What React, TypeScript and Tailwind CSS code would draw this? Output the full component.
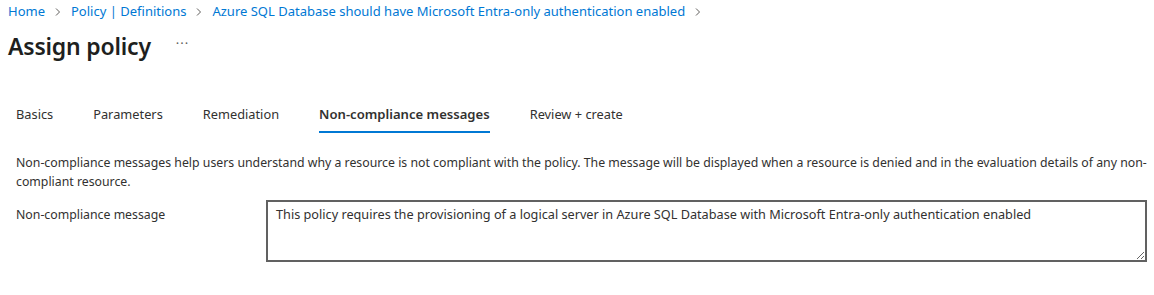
const tabs = ["Basics", "Parameters", "Remediation", "Non-compliance messages", "Review + create"];

const Chevron = () => (
  <svg width="8" height="10" viewBox="0 0 8 10" className="mx-[9px] shrink-0">
    <path d="M2 1.5 L5.5 5 L2 8.5" fill="none" stroke="#605e5c" strokeWidth="1" />
  </svg>
);

export default function App() {
  const active = "Non-compliance messages";

  return (
    <div
      className="w-[1154px] h-[295px] bg-white text-[#323130] overflow-hidden"
      style={{ fontFamily: '"Segoe UI", "Noto Sans", sans-serif' }}
    >
      <nav className="flex items-center h-[24px] pl-[8px] text-[13px] text-[#0078d4]">
        <span>Home</span>
        <Chevron />
        <span>Policy | Definitions</span>
        <Chevron />
        <span>Azure SQL Database should have Microsoft Entra-only authentication enabled</span>
        <Chevron />
      </nav>

      <div className="flex items-center h-[44px] pl-[8px]">
        <h1 className="text-[23px] font-semibold text-[#201f1e] tracking-[-0.2px]">Assign policy</h1>
        <span className="ml-[25px] mt-[-4px] text-[13px] text-[#605e5c] tracking-[1px]">···</span>
      </div>

      <div className="flex pt-[37px] pl-[16px] text-[12.8px] leading-[18px]">
        {tabs.map((t) => (
          <div key={t} className="mr-[40px] flex flex-col">
            <span className={t === active ? "font-semibold text-[13.1px] text-[#323130]" : "text-[#323130]"}>{t}</span>
            <div className={t === active ? "h-[2px] mt-[8px] bg-[#0078d4]" : "h-[2px] mt-[8px]"} />
          </div>
        ))}
      </div>

      <p className="mt-[20px] pl-[16px] text-[12.3px] leading-[19px] text-[#323130] whitespace-nowrap">
        Non-compliance messages help users understand why a resource is not compliant with the policy. The message will be displayed when a resource is denied and in the evaluation details of any non-
        <br />
        compliant resource.
      </p>

      <div className="flex mt-[9px] pl-[16px]">
        <label className="w-[250px] pt-[5px] text-[12.3px] leading-[19px] text-[#323130]">Non-compliance message</label>
        <textarea
          readOnly
          className="w-[881px] h-[62px] border-2 border-[#616161] px-[8px] pt-[3px] text-[12.7px] leading-[19px] text-[#323130] outline-none resize-y"
          style={{ fontFamily: '"Segoe UI", "Noto Sans", sans-serif' }}
          defaultValue="This policy requires the provisioning of a logical server in Azure SQL Database with Microsoft Entra-only authentication enabled"
        />
      </div>
    </div>
  );
}
